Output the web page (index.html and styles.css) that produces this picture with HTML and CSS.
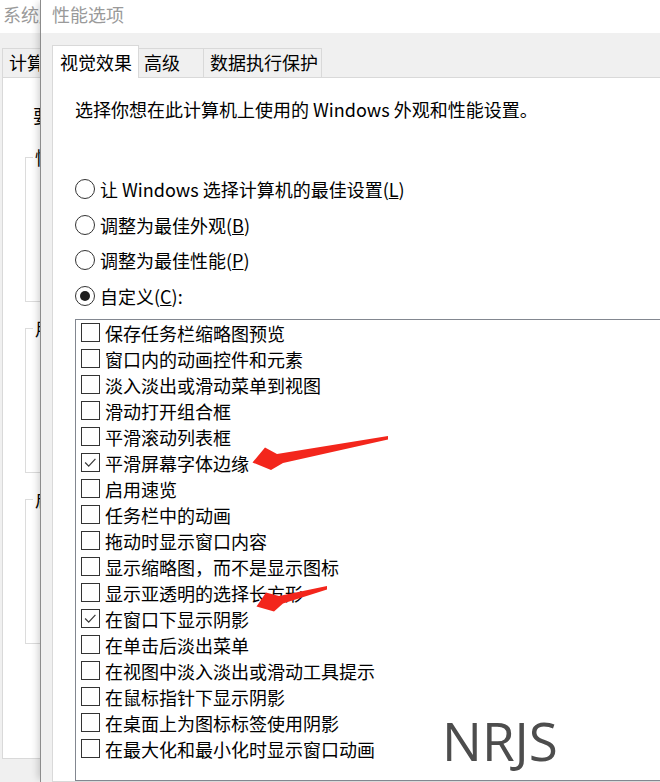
FILE: index.html
```html
<!DOCTYPE html>
<html lang="zh-CN">
<head>
<meta charset="utf-8">
<title>性能选项</title>
<link rel="stylesheet" href="styles.css">
</head>
<body>
<div class="desktop">
  <div class="win win-back">
    <div class="titlebar"><span class="clip clip-title">系统属性</span></div>
    <div class="win-body">
      <div class="tabs">
        <div class="tab"><span class="clip clip-tab">计算机名</span></div>
      </div>
      <div class="panel back-panel">
        <p class="note"><span class="clip clip-note">要进行大多数更改，你必须作为管理员登录。</span></p>
        <fieldset class="group"><legend><span class="clip clip-legend">性能</span></legend></fieldset>
        <fieldset class="group"><legend><span class="clip clip-legend">用户配置文件</span></legend></fieldset>
        <fieldset class="group"><legend><span class="clip clip-legend">启动和故障恢复</span></legend></fieldset>
      </div>
    </div>
  </div>

  <div class="win win-front">
    <div class="titlebar">性能选项</div>
    <div class="win-body">
      <div class="tabs">
        <div class="tab tab-active">视觉效果</div>
        <div class="tab tab-adv">高级</div>
        <div class="tab tab-dep">数据执行保护</div>
      </div>
      <div class="panel front-panel">
        <p class="desc">选择你想在此计算机上使用的 Windows 外观和性能设置。</p>
        <div class="radios">
          <div class="radio-row"><span class="radio"></span><span>让 Windows 选择计算机的最佳设置(<u>L</u>)</span></div>
          <div class="radio-row"><span class="radio"></span><span>调整为最佳外观(<u>B</u>)</span></div>
          <div class="radio-row"><span class="radio"></span><span>调整为最佳性能(<u>P</u>)</span></div>
          <div class="radio-row"><span class="radio radio-on"></span><span>自定义(<u>C</u>):</span></div>
        </div>
        <div class="listbox">
          <div class="item"><span class="cb"></span><span>保存任务栏缩略图预览</span></div>
          <div class="item"><span class="cb"></span><span>窗口内的动画控件和元素</span></div>
          <div class="item"><span class="cb"></span><span>淡入淡出或滑动菜单到视图</span></div>
          <div class="item"><span class="cb"></span><span>滑动打开组合框</span></div>
          <div class="item"><span class="cb"></span><span>平滑滚动列表框</span></div>
          <div class="item"><span class="cb"><svg viewBox="0 0 19 19" width="17" height="17"><polyline points="3.5,9.5 7.5,13.5 15,5.5" fill="none" stroke="#3a3a3a" stroke-width="1.4"/></svg></span><span>平滑屏幕字体边缘</span></div>
          <div class="item"><span class="cb"></span><span>启用速览</span></div>
          <div class="item"><span class="cb"></span><span>任务栏中的动画</span></div>
          <div class="item"><span class="cb"></span><span>拖动时显示窗口内容</span></div>
          <div class="item"><span class="cb"></span><span>显示缩略图，而不是显示图标</span></div>
          <div class="item"><span class="cb"></span><span>显示亚透明的选择长方形</span></div>
          <div class="item"><span class="cb"><svg viewBox="0 0 19 19" width="17" height="17"><polyline points="3.5,9.5 7.5,13.5 15,5.5" fill="none" stroke="#3a3a3a" stroke-width="1.4"/></svg></span><span>在窗口下显示阴影</span></div>
          <div class="item"><span class="cb"></span><span>在单击后淡出菜单</span></div>
          <div class="item"><span class="cb"></span><span>在视图中淡入淡出或滑动工具提示</span></div>
          <div class="item"><span class="cb"></span><span>在鼠标指针下显示阴影</span></div>
          <div class="item"><span class="cb"></span><span>在桌面上为图标标签使用阴影</span></div>
          <div class="item"><span class="cb"></span><span>在最大化和最小化时显示窗口动画</span></div>
        </div>
      </div>
    </div>
  </div>

  <svg class="annot" viewBox="0 0 660 782" width="660" height="782">
    <polygon points="388,436 277,454 265,447.5 252.5,462.5 271,470 283,463 388,439.5" fill="#f3261c"/>
    <polygon points="327,586 279,596 266,592.5 256.5,606.5 274,611.5 283,603.5 327,589.5" fill="#f3261c"/>
  </svg>
  <div class="watermark">NRJS</div>
</div>
</body>
</html>
```

FILE: styles.css
```css
* { box-sizing: border-box; }
html, body {
  margin: 0;
  padding: 0;
  width: 660px;
  height: 782px;
  overflow: hidden;
  background: #f0f0f0;
}
body {
  font-family: "Noto Sans CJK SC", "Noto Sans", sans-serif;
  font-size: 18px;
  color: #000;
}
.desktop {
  position: relative;
  width: 660px;
  height: 782px;
  overflow: hidden;
}
.win {
  position: absolute;
  top: 0;
  height: 782px;
  display: flex;
  flex-direction: column;
  background: #f0f0f0;
}
.win-back {
  left: 0;
  width: 48px;
  overflow: hidden;
}
.win-front {
  left: 40px;
  width: 640px;
  border-left: 1px solid #8c8c8c;
  box-shadow: -5px 0 7px -3px rgba(0, 0, 0, 0.18);
}
.clip {
  display: inline-block;
  overflow: hidden;
  white-space: nowrap;
  vertical-align: top;
}
.clip-title { width: 38px; }
.clip-tab { width: 30px; }
.clip-note { width: 12px; }
.clip-legend { width: 8px; }
.titlebar {
  height: 33px;
  flex: none;
  background: #fff;
  color: #9a9a9a;
  line-height: 28px;
}
.win-back .titlebar { padding-left: 3px; }
.win-front .titlebar { padding-left: 11px; }
.win-body {
  flex: 1;
  display: flex;
  flex-direction: column;
  background: #f0f0f0;
}
.win-back .win-body { padding: 15px 0 0 2px; }
.win-front .win-body { padding: 12px 0 0 11px; }
.tabs {
  display: flex;
  align-items: flex-end;
  flex: none;
}
.tab {
  height: 29px;
  border: 1px solid #d9d9d9;
  border-bottom: none;
  background: #f0f0f0;
  line-height: 26px;
  padding-left: 6px;
  white-space: nowrap;
}
.win-back .tab { width: 90px; }
.tab-active {
  position: relative;
  z-index: 1;
  height: 33px;
  width: 87px;
  margin-bottom: -1px;
  background: #fff;
  padding: 3px 0 0 7px;
}
.tab-adv { width: 66px; margin-left: -1px; padding-left: 5px; }
.tab-dep { width: 119px; margin-left: -1px; padding-left: 6px; }
.panel {
  flex: 1;
  background: #fff;
  border: 1px solid #d9d9d9;
  border-right: none;
}
.back-panel {
  flex: none;
  height: 682px;
  padding-top: 24px;
}
.note {
  margin: 0 0 19px 30px;
  line-height: 26px;
  height: 26px;
  white-space: nowrap;
}
.group {
  margin: 0 0 16px 22px;
  width: 380px;
  height: 155px;
  padding: 0 0 0 7px;
  border: 1px solid #dcdcdc;
  min-width: 0;
}
.group legend {
  padding: 0 2px;
  line-height: 20px;
}
.front-panel {
  padding: 18px 0 0 22px;
  display: flex;
  flex-direction: column;
}
.desc {
  margin: 0;
  line-height: 26px;
  white-space: nowrap;
}
.radios {
  margin-top: 49px;
  display: flex;
  flex-direction: column;
}
.radio-row {
  height: 35.7px;
  display: flex;
  align-items: center;
  gap: 5px;
  white-space: nowrap;
}
.radio {
  width: 20px;
  height: 20px;
  border: 1px solid #333;
  border-radius: 50%;
  flex: none;
  display: flex;
  align-items: center;
  justify-content: center;
}
.radio-on::after {
  content: "";
  width: 10px;
  height: 10px;
  border-radius: 50%;
  background: #1f1f1f;
}
.listbox {
  margin-top: 5px;
  flex: 1;
  border: 1px solid #828790;
  border-right: none;
  padding-left: 5px;
}
.item {
  height: 26px;
  display: flex;
  align-items: center;
  gap: 5px;
  white-space: nowrap;
}
.cb {
  width: 19px;
  height: 19px;
  border: 1px solid #333;
  flex: none;
  display: flex;
  align-items: center;
  justify-content: center;
}
.cb svg { display: block; }
.annot {
  position: absolute;
  left: 0;
  top: 0;
  pointer-events: none;
}
.watermark {
  position: absolute;
  left: 442px;
  top: 714px;
  font-family: "Open Sans", "Noto Sans", sans-serif;
  font-size: 53px;
  line-height: 53px;
  color: #4d4d4d;
}
```
